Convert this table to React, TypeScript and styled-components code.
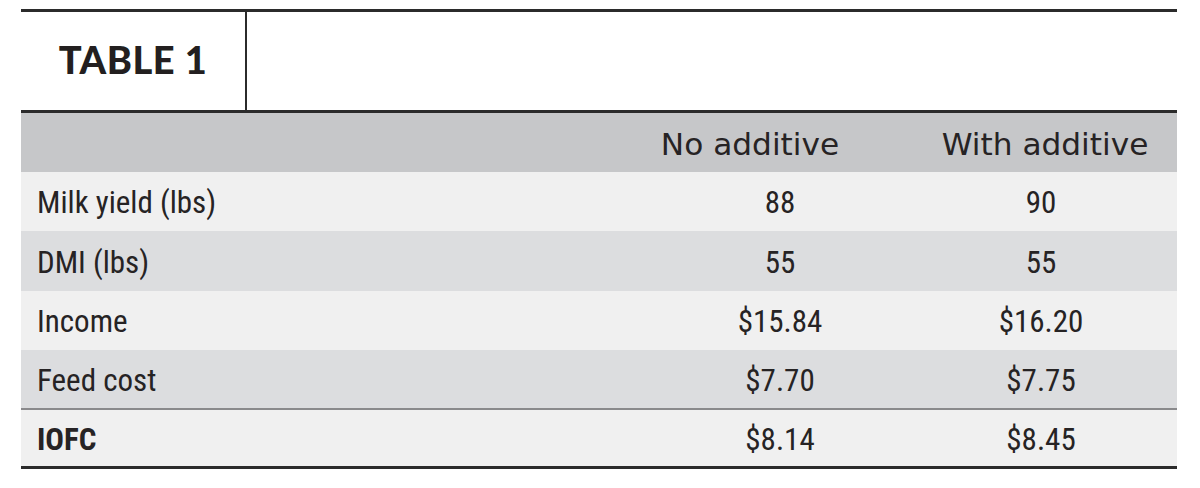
import React from "react";
import styled, { createGlobalStyle } from "styled-components";

const Global = createGlobalStyle`
  html, body { margin: 0; padding: 0; background: #ffffff; }
  body { width: 1200px; height: 488px; overflow: hidden; }
`;

const Page = styled.div`
  padding: 9px 23px 0 21px;
`;

const Table = styled.div`
  width: 1156px;
  border-top: 3px solid #2b2b2b;
  border-bottom: 3px solid #2b2b2b;
`;

const TitleBar = styled.div`
  display: grid;
  grid-template-columns: 226px 1fr;
  height: 98px;
  border-bottom: 3px solid #2b2b2b;
`;

const TitleCell = styled.div`
  display: flex;
  align-items: center;
  justify-content: center;
  border-right: 2px solid #2b2b2b;
  font-family: "Lato", "Noto Sans", sans-serif;
  font-weight: 900;
  font-size: 38px;
  letter-spacing: 0.5px;
  color: #231f20;
  padding-bottom: 4px;
`;

const Row = styled.div<{ $bg: string; $h: number; $top?: boolean }>`
  display: grid;
  grid-template-columns: 634px 250px 272px;
  height: ${(p) => p.$h}px;
  background: ${(p) => p.$bg};
  align-items: center;
  ${(p) => (p.$top ? "border-top: 2px solid #8a8a8c;" : "")}
`;

const HeadCell = styled.div<{ $shift: number }>`
  font-family: "DejaVu Sans", "Noto Sans", sans-serif;
  font-size: 30px;
  color: #262324;
  text-align: center;
  white-space: nowrap;
  transform: translateX(${(p) => p.$shift}px) scaleX(1.04);
  padding-top: 4px;
`;

const Label = styled.div<{ $bold?: boolean }>`
  font-family: "Liberation Sans Narrow", "Roboto Condensed", "Roboto", sans-serif;
  font-size: 31px;
  font-weight: ${(p) => (p.$bold ? 700 : 400)};
  color: #262324;
  padding-left: 16px;
  padding-top: 2px;
`;

const Value = styled.div`
  font-family: "Liberation Sans Narrow", "Roboto Condensed", "Roboto", sans-serif;
  font-size: 31px;
  color: #262324;
  text-align: center;
  padding-top: 2px;
`;

const rows = [
  { label: "Milk yield (lbs)", a: "88", b: "90", bg: "#f0f0f0", h: 59 },
  { label: "DMI (lbs)", a: "55", b: "55", bg: "#dcdddf", h: 60 },
  { label: "Income", a: "$15.84", b: "$16.20", bg: "#f0f0f0", h: 59 },
  { label: "Feed cost", a: "$7.70", b: "$7.75", bg: "#dcdddf", h: 58 },
];

export default function App() {
  return (
    <>
      <Global />
      <Page>
        <Table>
          <TitleBar>
            <TitleCell>TABLE 1</TitleCell>
            <div />
          </TitleBar>
          <Row $bg="#c6c7c9" $h={59}>
            <div />
            <HeadCell $shift={-30}>No additive</HeadCell>
            <HeadCell $shift={4}>With additive</HeadCell>
          </Row>
          {rows.map((r) => (
            <Row key={r.label} $bg={r.bg} $h={r.h}>
              <Label>{r.label}</Label>
              <Value>{r.a}</Value>
              <Value>{r.b}</Value>
            </Row>
          ))}
          <Row $bg="#f0f0f0" $h={56} $top>
            <Label $bold>IOFC</Label>
            <Value>$8.14</Value>
            <Value>$8.45</Value>
          </Row>
        </Table>
      </Page>
    </>
  );
}
